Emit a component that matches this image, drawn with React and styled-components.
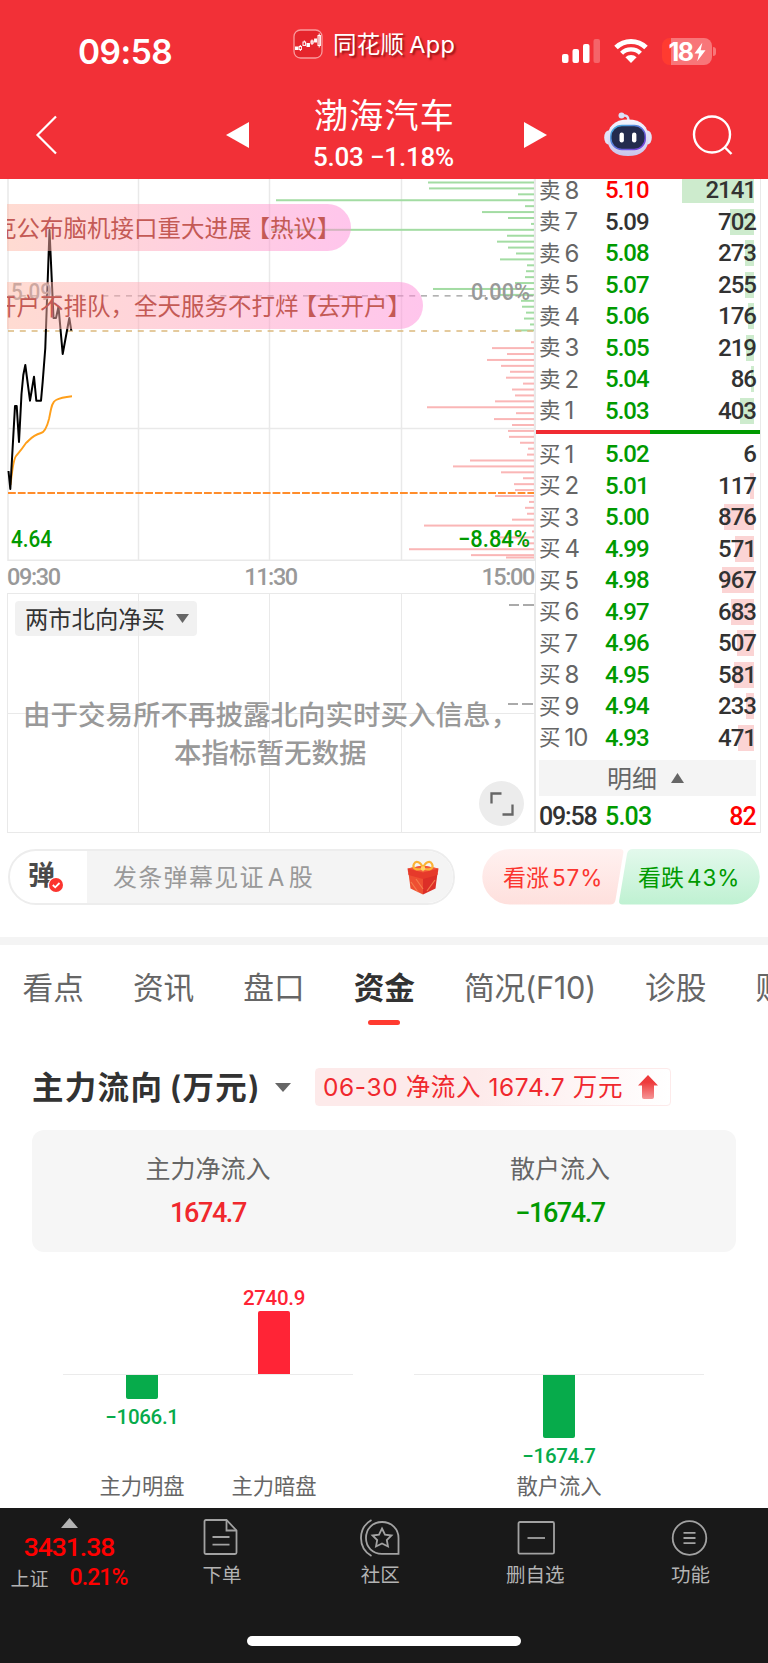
import React from 'react';
import styled, { createGlobalStyle } from 'styled-components';

const COLOR = {
  HEADER: '#f23037',
  UP: '#ff0000',
  UP_SOFT: '#f0282d',
  DOWN: '#009a00',
  INK: '#323232',
  SUB: '#666666',
  MUTED: '#999999',
  BORDER: '#e9e9e9',
  PANEL: '#f4f4f4',
  NAV: '#191919',
};

const FONT_TEXT = `'Inter', 'Noto Sans CJK SC', sans-serif`;
const FONT_NUMBER = `'Roboto', 'Noto Sans CJK SC', sans-serif`;

const SELL_ORDERS = [
  { label: '8', price: '5.10', amount: '2141', bar: 72, color: COLOR.UP },
  { label: '7', price: '5.09', amount: '702', bar: 24, color: COLOR.INK },
  { label: '6', price: '5.08', amount: '273', bar: 9 },
  { label: '5', price: '5.07', amount: '255', bar: 9 },
  { label: '4', price: '5.06', amount: '176', bar: 6 },
  { label: '3', price: '5.05', amount: '219', bar: 8 },
  { label: '2', price: '5.04', amount: '86', bar: 3 },
  { label: '1', price: '5.03', amount: '403', bar: 14 },
];

const BUY_ORDERS = [
  { label: '1', price: '5.02', amount: '6', bar: 0 },
  { label: '2', price: '5.01', amount: '117', bar: 4 },
  { label: '3', price: '5.00', amount: '876', bar: 30 },
  { label: '4', price: '4.99', amount: '571', bar: 19 },
  { label: '5', price: '4.98', amount: '967', bar: 32 },
  { label: '6', price: '4.97', amount: '683', bar: 23 },
  { label: '7', price: '4.96', amount: '507', bar: 17 },
  { label: '8', price: '4.95', amount: '581', bar: 20 },
  { label: '9', price: '4.94', amount: '233', bar: 8 },
  { label: '10', price: '4.93', amount: '471', bar: 16 },
];

// bar lengths by price level, top to bottom
const SELL_VOLUMES = [
  106, 105, 16, 258, 9, 52, 26, 3, 263, 27, 37, 26, 18, 34, 7, 8, 9, 19, 101, 34, 13, 12, 8, 10, 4, 19,
];
const BUY_VOLUMES = [
  3, 42, 27, 47, 33, 24, 28, 11, 22, 19, 39, 107, 18, 40, 22, 26, 25, 14, 6, 7, 64, 81, 33, 11, 20, 19, 39, 5, 9, 7,
  22, 110, 2, 35, 12, 125, 63,
];

const TABS = ['看点', '资讯', '盘口', '资金', '简况(F10)', '诊股', '财务'];

const PRICE_POINTS =
  '8.5,471 10.3,489 15,406 16.7,406 19,442 21.5,394 23.3,375 25.3,365 30,400.7 31.3,393 34,376.7 36.3,400.7 41,400.7 42.7,381.7 45.3,348 49.5,230 53.5,318 56,318 58.5,306.7 62.7,354 69.3,318 71.3,330.7';

const SignalIcon = () => (
  <svg width="40" height="26" viewBox="0 0 40 26" fill="#fff">
    <rect x="0" y="16" width="6.5" height="9" rx="2" />
    <rect x="10.5" y="11" width="6.5" height="14" rx="2" />
    <rect x="21" y="6" width="6.5" height="19" rx="2" />
    <rect x="31.5" y="1" width="6.5" height="24" rx="2" opacity="0.25" />
  </svg>
);

const WifiIcon = () => (
  <svg width="34" height="26" viewBox="0 0 34 26" fill="none" stroke="#fff">
    <path d="M2 9.5 A21.5 21.5 0 0 1 32 9.5" strokeWidth="5" />
    <path d="M7.6 15.2 A13.4 13.4 0 0 1 26.4 15.2" strokeWidth="4.4" />
    <path d="M17 25 L11.4 19.3 A8 8 0 0 1 22.6 19.3 Z" fill="#fff" stroke="none" />
  </svg>
);

const BoltIcon = () => (
  <svg width="12" height="20" viewBox="0 0 13 20" fill="#fff">
    <path d="M9 0 L0.5 11.5 H5.5 L3.5 20 L12.5 8 H7.2 Z" />
  </svg>
);

const AppLogo = () => (
  <svg width="30" height="30" viewBox="0 0 30 30">
    <rect x="1" y="1" width="28" height="28" rx="6.5" fill="#e5252c" stroke="#f99a9c" strokeWidth="1.3" />
    <g stroke="#fff" strokeWidth="1" fill="none">
      <rect x="2.5" y="18" width="2.5" height="2.5" fill="#fff" />
      <path d="M7.3 16 V22" />
      <rect x="6.2" y="17.5" width="2.2" height="3" fill="#e5252c" />
      <rect x="10" y="13" width="2.6" height="3.4" />
      <path d="M11.3 11.5 V13" />
      <rect x="14" y="14.5" width="2.4" height="3" fill="#fff" />
      <rect x="18" y="12" width="2.2" height="2.2" />
      <path d="M19 10.5 V16" />
      <rect x="21.6" y="10" width="2" height="3" fill="#fff" />
      <rect x="25" y="6.5" width="2.4" height="10" />
      <path d="M26.2 4.5 V18.5" />
    </g>
  </svg>
);

const BackIcon = () => (
  <svg width="24" height="42" viewBox="0 0 24 42" fill="none" stroke="#fff" strokeWidth="2.2">
    <path d="M21 2.5 L2.5 21 L21 39.5" />
  </svg>
);

const SearchIcon = () => (
  <svg width="42" height="42" viewBox="0 0 42 42" fill="none" stroke="#fff" strokeWidth="2.4">
    <circle cx="20" cy="20.5" r="18" />
    <path d="M32.5 33 L39.5 40" />
  </svg>
);

const RobotIcon = () => (
  <svg width="48" height="45" viewBox="0 0 48 45">
    <defs>
      <linearGradient id="robotShell" x1="0" y1="0" x2="0" y2="1">
        <stop offset="0" stopColor="#f5f6ff" />
        <stop offset="1" stopColor="#c9c5ec" />
      </linearGradient>
      <linearGradient id="robotRim" x1="0" y1="0" x2="1" y2="1">
        <stop offset="0" stopColor="#42b5df" />
        <stop offset="1" stopColor="#7b35d8" />
      </linearGradient>
    </defs>
    <path d="M17 4 C22 2.5 24.5 4 24.5 9" fill="none" stroke="#dbe0f7" strokeWidth="2.4" />
    <circle cx="17.5" cy="3.5" r="3" fill="#dbe0f7" />
    <ellipse cx="4.5" cy="25.5" rx="4.3" ry="7" fill="#e2e2f7" />
    <ellipse cx="43.5" cy="25.5" rx="4.3" ry="7" fill="#e2e2f7" />
    <path
      d="M24 7.5 C38 7.5 44.5 15 44.5 26 C44.5 38 37 44 24 44 C11 44 3.5 38 3.5 26 C3.5 15 10 7.5 24 7.5Z"
      fill="url(#robotShell)"
    />
    <rect x="6.8" y="13.5" width="34.5" height="24" rx="11" fill="#232b4d" stroke="url(#robotRim)" strokeWidth="1.5" />
    <rect x="15.5" y="20.5" width="4.4" height="10" rx="2.2" fill="#fff" />
    <rect x="28" y="20.5" width="4.4" height="10" rx="2.2" fill="#fff" />
  </svg>
);

const GiftIcon = () => (
  <svg width="32" height="35" viewBox="0 0 32 35">
    <path d="M1.5 13 L16 17 V34.5 L3.5 28.5Z" fill="#ee4f32" />
    <path d="M30.5 13 L16 17 V34.5 L28.5 28.5Z" fill="#dc2f28" />
    <path d="M0.5 8.5 L16 5.5 L31.5 8.5 L30.5 15 L16 19 L1.5 15Z" fill="#e63a2b" />
    <path d="M0.5 8.5 L16 5.5 L31.5 8.5 L16 12.5Z" fill="#f2563a" />
    <path d="M4 22 L11 32 M9 19 L16 29 M28 20 L20 31" stroke="#f57a4d" strokeWidth="1.2" />
    <path
      d="M16 8.5 C9 11 5 8 7 4 C9 0 14 2 16 8.5 C18 2 23 0 25 4 C27 8 23 11 16 8.5Z"
      fill="none"
      stroke="#fbb235"
      strokeWidth="2.2"
    />
    <circle cx="16" cy="8.5" r="2.2" fill="#ffd26a" />
  </svg>
);

const CheckBadge = () => (
  <svg width="16" height="16" viewBox="0 0 16 16">
    <circle cx="8" cy="8" r="8" fill="#fff" />
    <circle cx="8" cy="8" r="7" fill="#fb352f" />
    <path d="M4.8 8 L7.2 10.3 L11.5 6" fill="none" stroke="#fff" strokeWidth="1.8" />
  </svg>
);

const ExpandIcon = () => (
  <svg width="24" height="24" viewBox="0 0 24 24" fill="none" stroke="#666" strokeWidth="2.3">
    <path d="M1.5 11.5 V1.5 H11.5" />
    <path d="M22.5 12.5 V22.5 H12.5" />
  </svg>
);

const ArrowUpIcon = () => (
  <svg width="20" height="24" viewBox="0 0 20 24">
    <defs>
      <linearGradient id="arrowFade" x1="0" y1="0" x2="0" y2="1">
        <stop offset="0.3" stopColor="#ee3a3c" />
        <stop offset="1" stopColor="#f59596" />
      </linearGradient>
    </defs>
    <path d="M10 0 L20 10.5 H16 V22 Q16 24 14 24 H6 Q4 24 4 22 V10.5 H0Z" fill="url(#arrowFade)" />
  </svg>
);

const Triangle = ({ width, height, color, dir = 'down' }) => {
  const points = {
    down: `0,0 ${width},0 ${width / 2},${height}`,
    up: `0,${height} ${width},${height} ${width / 2},0`,
    left: `0,${height / 2} ${width},0 ${width},${height}`,
    right: `0,0 ${width},${height / 2} 0,${height}`,
  };
  return (
    <svg width={width} height={height}>
      <polygon points={points[dir]} fill={color} />
    </svg>
  );
};

const NavIcon = ({ name }) => (
  <svg width="42" height="40" viewBox="0 0 42 40" fill="none" stroke="#a2a2a2" strokeWidth="1.8">
    {name === 'order' && (
      <>
        <path d="M3.5 3.5 Q3.5 2 5 2 H25.5 L35.5 12.5 V34.5 Q35.5 36 34 36 H5 Q3.5 36 3.5 34.5Z" />
        <path d="M25.5 2 V12.5 H35.5 M11.5 19 H28.5 M11.5 26.7 H28.5" />
      </>
    )}
    {name === 'community' && (
      <>
        <path d="M23 4 C13.5 4 7 11 7 20 C7 29 13.5 35.8 23 35.8 H39.5 V20 C39.5 11 32.5 4 23 4Z" />
        <path d="M12.5 2 C-1.5 10 -1.5 30 12.5 38" />
        <path d="M23 10.5 L26 16.7 L32.5 17.5 L27.8 22 L29 28.5 L23 25.5 L17 28.5 L18.2 22 L13.5 17.5 L20 16.7Z" />
      </>
    )}
    {name === 'remove' && (
      <>
        <rect x="4.5" y="4" width="35.5" height="31.7" rx="1.5" />
        <path d="M13.5 20 H31" />
      </>
    )}
    {name === 'more' && (
      <>
        <circle cx="20.5" cy="20" r="16.8" />
        <path d="M14.5 14.8 H26.5 M14.5 20 H26.5 M14.5 25.2 H26.5" />
      </>
    )}
  </svg>
);

const Header = () => (
  <StyledHeader>
    <StyledStatusBar>
      <StyledClock>09:58</StyledClock>
      <StyledAppTag>
        <AppLogo />
        <span>同花顺 App</span>
      </StyledAppTag>
      <StyledStatusIcons>
        <SignalIcon />
        <WifiIcon />
        <StyledBattery>
          18
          <BoltIcon />
        </StyledBattery>
      </StyledStatusIcons>
    </StyledStatusBar>
    <StyledTitleBar>
      <StyledBackButton>
        <BackIcon />
      </StyledBackButton>
      <Triangle dir="left" width={23} height={26} color="#fff" />
      <StyledStockTitle>
        <StyledStockName>渤海汽车</StyledStockName>
        <StyledStockQuote>5.03 −1.18%</StyledStockQuote>
      </StyledStockTitle>
      <Triangle dir="right" width={23} height={26} color="#fff" />
      <StyledTitleActions>
        <RobotIcon />
        <SearchIcon />
      </StyledTitleActions>
    </StyledTitleBar>
  </StyledHeader>
);

const VolumeBars = ({ volumes, start, color }) =>
  volumes.map((length, i) => (
    <rect key={i} x={534 - length} y={start + i * 5.915} width={length} height="2" fill={color} />
  ));

const MinuteChart = () => (
  <StyledMinuteChart>
    <StyledChartSvg width="536" height="382" viewBox="0 179 536 382">
      <g stroke={COLOR.BORDER} strokeWidth="1.5" fill="none">
        <path d="M8 179 V560.3 H534.5 V179" />
        <path d="M138.5 179 V560 M269.5 179 V560 M401.5 179 V560 M8 428.5 H534" />
      </g>
      <VolumeBars volumes={SELL_VOLUMES} start={181.5} color="#a3dca3" />
      <VolumeBars volumes={BUY_VOLUMES} start={341.2} color="#fab6b6" />
      <rect x="506" y="556.5" width="28" height="2" fill="#fab6b6" />
      <path d="M8 295.8 H534" stroke="#999" strokeWidth="1.3" strokeDasharray="6 5.8" />
      <path d="M8 331 H534" stroke="#dcb97e" strokeWidth="1.3" strokeDasharray="6 5.8" />
      <path d="M8 493 H534" stroke="#ff8d2b" strokeWidth="2" strokeDasharray="7.8 2" />
      <path
        d="M10.5 485 C12 473 13 460 16 456 C18 453 20 452 26 443 C30 440 31 436 41 433 C45 432 47 427 49 419 C51 410 51.5 402 56 400 C60 398 66 397 72 396.3"
        fill="none"
        stroke="#ff9f1a"
        strokeWidth="1.9"
      />
      <polyline points={PRICE_POINTS} fill="none" stroke="#000" strokeWidth="2" strokeLinejoin="round" />
      <StyledAxisText x="11" y="300" fill="#999" textLength="41" lengthAdjust="spacingAndGlyphs">
        5.09
      </StyledAxisText>
      <StyledAxisText x="471" y="300" fill="#999" textLength="59" lengthAdjust="spacingAndGlyphs">
        0.00%
      </StyledAxisText>
      <StyledAxisText x="11" y="547" fill={COLOR.DOWN} textLength="41" lengthAdjust="spacingAndGlyphs">
        4.64
      </StyledAxisText>
      <StyledAxisText x="458" y="547" fill={COLOR.DOWN} textLength="72" lengthAdjust="spacingAndGlyphs">
        −8.84%
      </StyledAxisText>
    </StyledChartSvg>
    <StyledBulletLayer>
      <StyledBullet $width={344}>
        克公布脑机接口重大进展<em>【热议】</em>
      </StyledBullet>
      <StyledBullet $width={416}>
        开户不排队，全天服务不打烊<em>【去开户】</em>
      </StyledBullet>
    </StyledBulletLayer>
  </StyledMinuteChart>
);

const IndicatorChart = () => (
  <StyledIndicator>
    <StyledIndicatorHead>
      <StyledIndicatorSelect>
        <span>两市北向净买</span>
        <Triangle width={13} height={9} color={COLOR.SUB} />
      </StyledIndicatorSelect>
      <StyledDashes />
    </StyledIndicatorHead>
    <StyledIndicatorNotice>
      由于交易所不再披露北向实时买入信息，
      <br />
      <span>本指标暂无数据</span>
    </StyledIndicatorNotice>
    <StyledMidDashes />
    <StyledExpandButton>
      <ExpandIcon />
    </StyledExpandButton>
  </StyledIndicator>
);

const OrderRow = ({ side, order }) => (
  <StyledOrderRow>
    <StyledOrderLabel>
      {side === 'sell' ? '卖' : '买'}
      <span>{order.label}</span>
    </StyledOrderLabel>
    <StyledOrderPrice $color={order.color}>{order.price}</StyledOrderPrice>
    <StyledOrderAmount $side={side} $bar={order.bar}>
      {order.amount}
    </StyledOrderAmount>
  </StyledOrderRow>
);

const OrderBook = () => (
  <StyledOrderBook>
    <StyledSellList>
      {SELL_ORDERS.map((order) => (
        <OrderRow key={order.label} side="sell" order={order} />
      ))}
    </StyledSellList>
    <StyledRatioLine />
    <StyledBuyList>
      {BUY_ORDERS.map((order) => (
        <OrderRow key={order.label} side="buy" order={order} />
      ))}
    </StyledBuyList>
    <StyledDetailButton>
      <span>明细</span>
      <Triangle dir="up" width={13} height={10} color={COLOR.SUB} />
    </StyledDetailButton>
    <StyledTickRow>
      <StyledTickTime>09:58</StyledTickTime>
      <StyledTickPrice>5.03</StyledTickPrice>
      <StyledTickAmount>82</StyledTickAmount>
    </StyledTickRow>
  </StyledOrderBook>
);

const InteractBar = () => (
  <StyledInteractBar>
    <StyledBulletInput>
      <StyledBulletSwitch>
        弹
        <StyledBadge>
          <CheckBadge />
        </StyledBadge>
      </StyledBulletSwitch>
      <StyledPlaceholder>
        <span>发条弹幕见证 A 股</span>
        <GiftIcon />
      </StyledPlaceholder>
    </StyledBulletInput>
    <StyledVote>
      <svg width="278" height="56" viewBox="0 0 278 56">
        <defs>
          <linearGradient id="voteUp" x1="0" y1="0" x2="0" y2="1">
            <stop offset="0" stopColor="#fff1f0" />
            <stop offset="1" stopColor="#fee0dd" />
          </linearGradient>
          <linearGradient id="voteDown" x1="0" y1="0" x2="0" y2="1">
            <stop offset="0" stopColor="#e3f9ec" />
            <stop offset="1" stopColor="#bff1d2" />
          </linearGradient>
        </defs>
        <path
          d="M28 0 H138 Q142 0 141.3 4 L133.5 51 Q132.7 55.5 128 55.5 H28 A27.75 27.75 0 0 1 28 0Z"
          fill="url(#voteUp)"
        />
        <path
          d="M151 0 H250 A27.75 27.75 0 0 1 250 55.5 H140.5 Q136.5 55.5 137.2 51.5 L145 5 Q146 0 151 0Z"
          fill="url(#voteDown)"
        />
      </svg>
      <StyledVoteLabels>
        <StyledVoteLabel $color="#fb352f">
          看涨<span>57%</span>
        </StyledVoteLabel>
        <StyledVoteLabel $color={COLOR.DOWN}>
          看跌<span>43%</span>
        </StyledVoteLabel>
      </StyledVoteLabels>
    </StyledVote>
  </StyledInteractBar>
);

const BarColumn = ({ value, label, height, up }) => (
  <StyledBarColumn>
    <StyledBarUpper>
      {up && (
        <>
          <StyledBarValue $up>{value}</StyledBarValue>
          <StyledBar $up $height={height} />
        </>
      )}
    </StyledBarUpper>
    <StyledBarLower>
      {!up && (
        <>
          <StyledBar $height={height} />
          <StyledBarValue>{value}</StyledBarValue>
        </>
      )}
    </StyledBarLower>
    <StyledBarLabel>{label}</StyledBarLabel>
  </StyledBarColumn>
);

const FundFlow = () => (
  <StyledFundSection>
    <StyledFundHeader>
      <StyledFundTitle>主力流向 (万元)</StyledFundTitle>
      <Triangle width={16} height={9} color={COLOR.SUB} />
      <StyledFundTag>
        <span>06-30 净流入 1674.7 万元</span>
        <ArrowUpIcon />
      </StyledFundTag>
    </StyledFundHeader>
    <StyledSummaryCard>
      <StyledSummaryItem>
        <StyledSummaryLabel>主力净流入</StyledSummaryLabel>
        <StyledSummaryValue $color={COLOR.UP_SOFT}>1674.7</StyledSummaryValue>
      </StyledSummaryItem>
      <StyledSummaryItem>
        <StyledSummaryLabel>散户流入</StyledSummaryLabel>
        <StyledSummaryValue $color={COLOR.DOWN}>−1674.7</StyledSummaryValue>
      </StyledSummaryItem>
    </StyledSummaryCard>
    <StyledBarCharts>
      <StyledBarGroup $inset={13}>
        <BarColumn value="−1066.1" label="主力明盘" height={24} />
        <BarColumn value="2740.9" label="主力暗盘" height={63} up />
      </StyledBarGroup>
      <StyledBarGroup $inset={0}>
        <BarColumn value="−1674.7" label="散户流入" height={63} />
      </StyledBarGroup>
    </StyledBarCharts>
  </StyledFundSection>
);

const NAV_ITEMS = [
  { icon: 'order', label: '下单' },
  { icon: 'community', label: '社区' },
  { icon: 'remove', label: '删自选' },
  { icon: 'more', label: '功能' },
];

const BottomNav = () => (
  <StyledBottomNav>
    <StyledNavRow>
      <StyledIndexBlock>
        <Triangle dir="up" width={17} height={10} color="#b3b3b3" />
        <StyledIndexValue>3431.38</StyledIndexValue>
        <StyledIndexMeta>
          上证<strong>0.21%</strong>
        </StyledIndexMeta>
      </StyledIndexBlock>
      {NAV_ITEMS.map(({ icon, label }) => (
        <StyledNavItem key={icon}>
          <NavIcon name={icon} />
          <span>{label}</span>
        </StyledNavItem>
      ))}
    </StyledNavRow>
    <StyledHomeIndicator />
  </StyledBottomNav>
);

const App = () => (
  <StyledPage>
    <GlobalStyle />
    <Header />
    <StyledQuoteArea>
      <StyledChartColumn>
        <MinuteChart />
        <StyledTimeAxis>
          <span>09:30</span>
          <span>11:30</span>
          <span>15:00</span>
        </StyledTimeAxis>
        <IndicatorChart />
      </StyledChartColumn>
      <OrderBook />
    </StyledQuoteArea>
    <InteractBar />
    <StyledTabBar>
      {TABS.map((tab) => (
        <StyledTab key={tab} $active={tab === '资金'}>
          {tab}
        </StyledTab>
      ))}
    </StyledTabBar>
    <FundFlow />
    <BottomNav />
  </StyledPage>
);

const GlobalStyle = createGlobalStyle`
  * {
    box-sizing: border-box;
  }

  body {
    margin: 0;
    background-color: #fff;
  }

  svg {
    display: block;
    flex-shrink: 0;
  }
`;

const StyledPage = styled.div`
  display: flex;
  flex-direction: column;
  width: 768px;
  height: 1663px;
  overflow: hidden;
  background-color: #fff;
  color: ${COLOR.INK};
  font-family: ${FONT_TEXT};
  white-space: nowrap;
`;

const StyledHeader = styled.header`
  height: 179px;
  flex-shrink: 0;
  background-color: ${COLOR.HEADER};
  color: #fff;
`;

const StyledStatusBar = styled.div`
  display: grid;
  grid-template-columns: 293px 269px 1fr;
  height: 90px;
`;

const StyledClock = styled.div`
  padding: 32px 0 0 78px;
  font-size: 33.5px;
  font-weight: 600;
  line-height: 41px;
  letter-spacing: -0.5px;
`;

const StyledAppTag = styled.div`
  display: flex;
  align-items: center;
  gap: 10px;
  height: 30px;
  margin-top: 29px;
  font-size: 23.5px;
  letter-spacing: 0.3px;
  word-spacing: -2px;
  text-shadow: 2px 2px 2px rgba(90, 0, 0, 0.6);

  span {
    margin-top: -2px;
  }
`;

const StyledStatusIcons = styled.div`
  display: flex;
  align-items: flex-start;
  gap: 12px;
  padding-top: 38px;
`;

const StyledBattery = styled.div`
  position: relative;
  display: flex;
  align-items: center;
  justify-content: center;
  gap: 1px;
  width: 50px;
  height: 27px;
  margin-left: 2px;
  border-radius: 8px;
  background: linear-gradient(90deg, #ff3b30 18%, #f87679 18%);
  font-size: 25px;
  font-weight: 700;
  letter-spacing: -1.5px;

  &::after {
    content: '';
    position: absolute;
    right: -4px;
    top: 9px;
    width: 3px;
    height: 9px;
    border-radius: 0 4px 4px 0;
    background-color: #f87679;
  }
`;

const StyledTitleBar = styled.div`
  display: flex;
  align-items: center;
  height: 89px;
`;

const StyledBackButton = styled.div`
  width: 226px;
  padding-left: 35px;
`;

const StyledStockTitle = styled.div`
  width: 275px;
  margin-top: -3px;
  padding-right: 6px;
  text-align: center;
`;

const StyledStockName = styled.h1`
  margin: 0;
  padding-left: 2px;
  font-size: 34px;
  font-weight: 400;
  line-height: 48px;
  letter-spacing: 1.2px;
`;

const StyledStockQuote = styled.div`
  font-family: ${FONT_NUMBER};
  font-size: 26px;
  font-weight: 500;
  line-height: 34px;
  letter-spacing: -0.2px;
`;

const StyledTitleActions = styled.div`
  display: flex;
  align-items: center;
  gap: 40px;
  margin-left: 57px;
`;

const StyledQuoteArea = styled.main`
  display: flex;
  flex-shrink: 0;
  height: 654px;
`;

const StyledChartColumn = styled.section`
  display: flex;
  flex-direction: column;
  width: 535px;
`;

const StyledMinuteChart = styled.div`
  position: relative;
  height: 382px;
`;

const StyledChartSvg = styled.svg`
  font-family: ${FONT_NUMBER};
  font-weight: 500;
`;

const StyledAxisText = styled.text`
  font-size: 24px;
`;

/* bullet comments float over the chart */
const StyledBulletLayer = styled.div`
  position: absolute;
  top: 25px;
  left: 7px;
  display: flex;
  flex-direction: column;
  gap: 31px;
`;

const StyledBullet = styled.div`
  width: ${({ $width }) => $width}px;
  height: 47px;
  padding-right: 4px;
  overflow: hidden;
  border-radius: 0 24px 24px 0;
  background: linear-gradient(90deg, rgba(255, 184, 165, 0.5), rgba(255, 140, 217, 0.5));
  color: #c45a55;
  font-size: 23.5px;
  line-height: 49px;
  text-indent: -14px;

  em {
    margin-left: -5px;
    font-style: normal;
  }
`;

const StyledTimeAxis = styled.div`
  display: flex;
  justify-content: space-between;
  height: 32px;
  padding: 0 1px 0 7px;
  color: ${COLOR.MUTED};
  font-family: ${FONT_NUMBER};
  font-size: 23.5px;
  font-weight: 500;
  line-height: 32px;
  letter-spacing: -1.4px;
`;

const StyledIndicator = styled.div`
  position: relative;
  height: 240px;
  margin-left: 7px;
  border: 1.5px solid ${COLOR.BORDER};
  background:
    linear-gradient(${COLOR.BORDER}, ${COLOR.BORDER}) 0 119px / 100% 1px no-repeat,
    linear-gradient(${COLOR.BORDER}, ${COLOR.BORDER}) 130px 0 / 1px 100% no-repeat,
    linear-gradient(${COLOR.BORDER}, ${COLOR.BORDER}) 261px 0 / 1px 100% no-repeat,
    linear-gradient(${COLOR.BORDER}, ${COLOR.BORDER}) 393px 0 / 1px 100% no-repeat;
`;

const StyledIndicatorHead = styled.div`
  display: flex;
  justify-content: space-between;
  padding: 7px 0 0 7px;
`;

const StyledIndicatorSelect = styled.div`
  display: flex;
  align-items: center;
  gap: 11px;
  width: 182px;
  height: 35px;
  padding-left: 10px;
  border-radius: 4px;
  background-color: rgba(236, 236, 236, 0.75);
  font-size: 23.3px;

  span {
    margin-top: -2px;
  }
`;

const StyledDashes = styled.div`
  width: 25px;
  height: 2px;
  margin-top: 3px;
  background: linear-gradient(90deg, #aaa 42%, transparent 42% 58%, #aaa 58%);
`;

const StyledMidDashes = styled(StyledDashes)`
  position: absolute;
  top: 106px;
  right: 1px;
`;

const StyledIndicatorNotice = styled.p`
  margin: 60px 0 0 15px;
  color: ${COLOR.MUTED};
  font-size: 27.5px;
  font-weight: 500;
  line-height: 38px;

  span {
    padding-left: 151px;
  }
`;

const StyledExpandButton = styled.div`
  position: absolute;
  right: 10px;
  bottom: 6px;
  display: flex;
  align-items: center;
  justify-content: center;
  width: 45px;
  height: 45px;
  border-radius: 50%;
  background-color: #ececec;
`;

const StyledOrderBook = styled.aside`
  display: flex;
  flex-direction: column;
  width: 226px;
  overflow: hidden;
  border: solid ${COLOR.BORDER};
  border-width: 0 1.5px 1.5px 1.5px;
`;

const StyledSellList = styled.div`
  height: 251px;
  flex-shrink: 0;
  padding: 0 4px 0 3px;

  > :first-child {
    margin-top: -4.5px;
  }
`;

const StyledRatioLine = styled.div`
  height: 4px;
  flex-shrink: 0;
  background: linear-gradient(90deg, #f02b32 51%, ${COLOR.DOWN} 51%);
`;

const StyledBuyList = styled.div`
  height: 326px;
  flex-shrink: 0;
  padding: 4.5px 4px 0 3px;
`;

const StyledOrderRow = styled.div`
  display: grid;
  grid-template-columns: 66px 60px 1fr;
  align-items: center;
  height: 31.5px;
`;

const StyledOrderLabel = styled.div`
  display: flex;
  align-items: center;
  gap: 4px;
  color: ${COLOR.SUB};
  font-size: 21.5px;
  line-height: 29px;

  span {
    font-size: 24px;
    letter-spacing: -1px;
  }
`;

const StyledOrderPrice = styled.div`
  color: ${({ $color }) => $color || COLOR.DOWN};
  font-family: ${FONT_NUMBER};
  font-size: 24px;
  font-weight: 500;
  letter-spacing: -1px;
`;

const StyledOrderAmount = styled.div`
  height: 26px;
  background: linear-gradient(
      ${({ $side }) => ($side === 'sell' ? '#cdebcd, #cdebcd' : '#fbd4d4, #fbd4d4')}
    )
    right 2px top 0 / ${({ $bar }) => $bar}px 100% no-repeat;
  font-family: ${FONT_NUMBER};
  font-size: 24px;
  font-weight: 500;
  line-height: 27px;
  letter-spacing: -1px;
  text-align: right;
`;

const StyledDetailButton = styled.div`
  display: flex;
  align-items: center;
  justify-content: center;
  gap: 14px;
  height: 36px;
  flex-shrink: 0;
  margin: 0 4px 0 3px;
  padding-right: 4px;
  background-color: ${COLOR.PANEL};
  color: ${COLOR.SUB};
  font-size: 25px;

  span {
    margin-top: -3px;
  }
`;

const StyledTickRow = styled.div`
  display: grid;
  grid-template-columns: 66px 60px 1fr;
  align-items: center;
  height: 35px;
  padding: 6px 4px 0 3px;
  font-family: ${FONT_NUMBER};
  font-size: 25px;
  font-weight: 500;
  letter-spacing: -0.8px;
`;

const StyledTickTime = styled.div`
  letter-spacing: -1.2px;
`;

const StyledTickPrice = styled.div`
  color: ${COLOR.DOWN};
`;

const StyledTickAmount = styled.div`
  color: ${COLOR.UP};
  text-align: right;
`;

const StyledInteractBar = styled.section`
  display: flex;
  align-items: flex-start;
  justify-content: space-between;
  height: 112px;
  flex-shrink: 0;
  padding: 16px 8px 0;
  border-bottom: 8px solid ${COLOR.PANEL};
`;

const StyledBulletInput = styled.div`
  display: flex;
  width: 447px;
  height: 56px;
  overflow: hidden;
  border: 2px solid #ededed;
  border-radius: 28px;
`;

const StyledBulletSwitch = styled.div`
  position: relative;
  width: 77px;
  padding-left: 18px;
  color: #4a4a4a;
  font-size: 27px;
  font-weight: 700;
  line-height: 50px;
`;

const StyledBadge = styled.div`
  position: absolute;
  left: 38px;
  top: 26px;
`;

const StyledPlaceholder = styled.div`
  display: flex;
  flex: 1;
  align-items: center;
  justify-content: space-between;
  padding: 0 14px 0 26px;
  background-color: ${COLOR.PANEL};
  color: ${COLOR.MUTED};
  font-size: 24px;
  letter-spacing: 1.3px;
  word-spacing: -5px;

  span {
    margin-top: -3px;
  }
`;

const StyledVote = styled.div`
  display: grid;

  > * {
    grid-area: 1 / 1;
  }
`;

const StyledVoteLabels = styled.div`
  display: flex;
  align-items: center;
  gap: 35px;
  height: 53px;
  padding-left: 21px;
`;

const StyledVoteLabel = styled.div`
  width: 100px;
  color: ${({ $color }) => $color};
  font-size: 23px;

  span {
    margin-left: 3px;
    font-size: 22.5px;
    letter-spacing: 0.9px;
  }
`;

const StyledTabBar = styled.nav`
  display: flex;
  gap: 49px;
  height: 80px;
  flex-shrink: 0;
  padding: 19px 0 0 22.5px;
  overflow: hidden;
`;

const StyledTab = styled.div`
  display: flex;
  flex-direction: column;
  align-items: center;
  flex-shrink: 0;
  color: ${({ $active }) => ($active ? COLOR.INK : COLOR.SUB)};
  font-size: 30.7px;
  font-weight: ${({ $active }) => ($active ? 700 : 400)};
  line-height: 48px;

  &:nth-child(5) {
    letter-spacing: -0.25px;
  }

  &::after {
    content: '';
    width: 32px;
    height: 6px;
    margin-top: 8px;
    border-radius: 3px;
    background-color: ${({ $active }) => ($active ? '#ff3b30' : 'transparent')};
  }
`;

const StyledFundSection = styled.section`
  height: 483px;
  flex-shrink: 0;
  padding: 43px 32px 0;
`;

const StyledFundHeader = styled.div`
  display: flex;
  align-items: center;
  height: 38px;
`;

const StyledFundTitle = styled.h2`
  width: 243px;
  margin: -4px 0 0;
  font-size: 31.5px;
  font-weight: 600;
  letter-spacing: 1.3px;
  word-spacing: -3px;
`;

const StyledFundTag = styled.div`
  display: flex;
  align-items: center;
  justify-content: space-between;
  width: 356px;
  height: 38px;
  margin-left: 24px;
  padding: 0 12px 0 7px;
  border: 1px solid #fdeaea;
  border-radius: 4px;
  background: linear-gradient(90deg, #fdeaea 45%, #fff);
  color: ${COLOR.UP_SOFT};
  font-size: 24.5px;
  letter-spacing: 0.6px;

  span {
    margin-top: -4px;
  }
`;

const StyledSummaryCard = styled.div`
  display: grid;
  grid-template-columns: 1fr 1fr;
  height: 122px;
  margin-top: 24px;
  padding-top: 18px;
  border-radius: 12px;
  background-color: #f6f6f6;
`;

const StyledSummaryItem = styled.div`
  text-align: center;
`;

const StyledSummaryLabel = styled.div`
  color: ${COLOR.SUB};
  font-size: 25px;
  line-height: 42px;
`;

const StyledSummaryValue = styled.div`
  color: ${({ $color }) => $color};
  font-family: ${FONT_NUMBER};
  font-size: 27px;
  font-weight: 500;
  line-height: 47px;
  letter-spacing: -1.4px;
`;

const StyledBarCharts = styled.div`
  display: flex;
  gap: 61px;
  padding: 32px 30px 0 31px;
`;

const StyledBarGroup = styled.div`
  display: flex;
  width: 290px;
  padding: 0 ${({ $inset }) => $inset}px;
  background: linear-gradient(#ebebeb, #ebebeb) 0 90px / 100% 1px no-repeat;
`;

const StyledBarColumn = styled.div`
  display: flex;
  flex: 1;
  flex-direction: column;
  align-items: center;
`;

const StyledBarUpper = styled.div`
  display: flex;
  flex-direction: column;
  align-items: center;
  justify-content: flex-end;
  height: 90px;
`;

const StyledBarLower = styled.div`
  display: flex;
  flex-direction: column;
  align-items: center;
  height: 97px;
  padding-top: 1px;
`;

const StyledBarValue = styled.div`
  color: ${({ $up }) => ($up ? '#ff2436' : '#07ab4b')};
  font-family: ${FONT_NUMBER};
  font-size: 20.5px;
  font-weight: 500;
  line-height: ${({ $up }) => ($up ? 25 : 37)}px;
  letter-spacing: -0.3px;
`;

const StyledBar = styled.div`
  width: 32px;
  height: ${({ $height }) => $height}px;
  flex-shrink: 0;
  border-radius: ${({ $up }) => ($up ? '2px 2px 0 0' : '0 0 2px 2px')};
  background-color: ${({ $up }) => ($up ? '#ff2436' : '#07ab4b')};
`;

const StyledBarLabel = styled.div`
  color: ${COLOR.SUB};
  font-size: 21.3px;
  line-height: 30px;
`;

const StyledBottomNav = styled.footer`
  display: flex;
  flex-direction: column;
  align-items: center;
  height: 156px;
  flex-shrink: 0;
  background-color: ${COLOR.NAV};
`;

const StyledNavRow = styled.div`
  display: flex;
  width: 768px;
  height: 128px;
`;

const StyledIndexBlock = styled.div`
  display: flex;
  flex-direction: column;
  align-items: center;
  width: 138px;
  margin-right: 6.5px;
  padding-top: 10px;
`;

const StyledIndexValue = styled.div`
  margin-top: 3px;
  color: ${COLOR.UP};
  font-family: ${FONT_NUMBER};
  font-size: 26.5px;
  font-weight: 500;
  line-height: 32px;
  letter-spacing: -1px;
`;

const StyledIndexMeta = styled.div`
  display: flex;
  align-items: center;
  gap: 21px;
  height: 29px;
  color: #b3b3b3;
  font-size: 19px;

  strong {
    color: ${COLOR.UP};
    font-family: ${FONT_NUMBER};
    font-size: 23px;
    font-weight: 500;
    letter-spacing: -0.9px;
  }
`;

const StyledNavItem = styled.div`
  display: flex;
  flex: 1;
  flex-direction: column;
  align-items: center;
  padding-top: 10px;
  color: #b3b3b3;
  font-size: 19.5px;
  line-height: 34px;

  /* the wide speech-bubble icon sits a touch right of its column */
  &:nth-child(3) {
    padding-left: 3px;
  }
`;

const StyledHomeIndicator = styled.div`
  width: 274px;
  height: 10px;
  border-radius: 5px;
  background-color: #fff;
`;

export default App;
